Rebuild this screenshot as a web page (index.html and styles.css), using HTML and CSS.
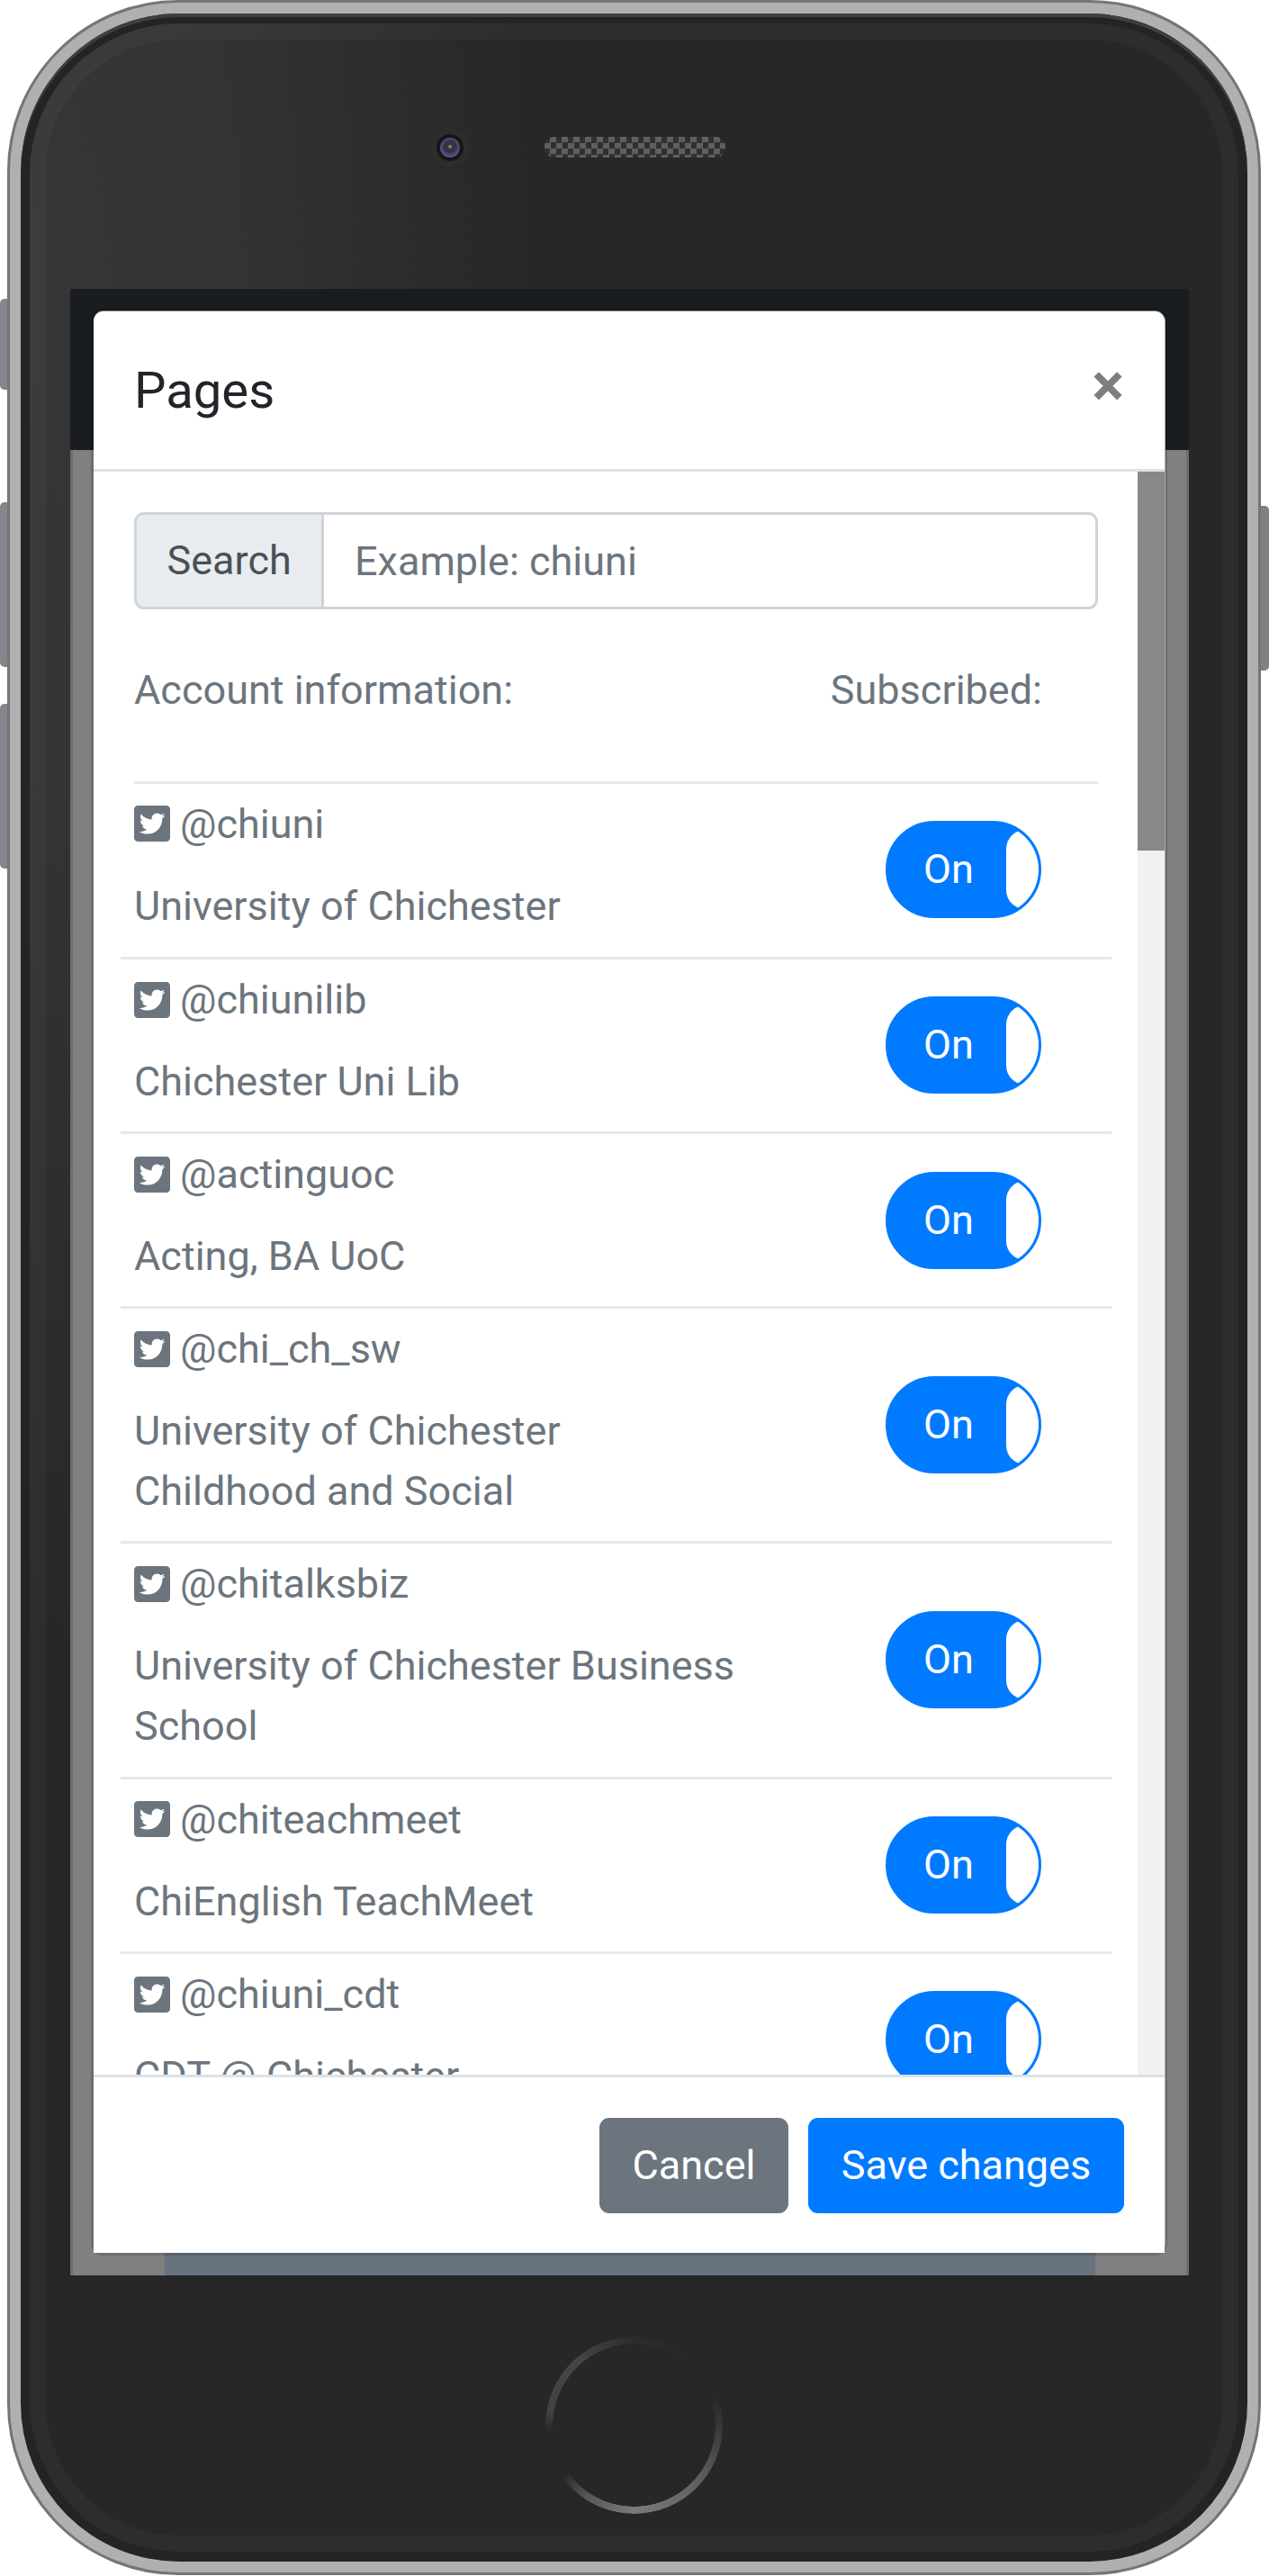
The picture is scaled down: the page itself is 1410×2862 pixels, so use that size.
FILE: index.html
```html
<!DOCTYPE html>
<html lang="en">
<head>
<meta charset="utf-8">
<title>Pages</title>
<link rel="stylesheet" href="styles.css">
</head>
<body>
<div class="phone">
  <span class="side-btn side-left btn-mute"></span>
  <span class="side-btn side-left btn-up"></span>
  <span class="side-btn side-left btn-down"></span>
  <span class="side-btn side-right btn-power"></span>
  <div class="shell">
    <div class="bezel">
      <div class="band">
        <div class="face">
          <div class="sensors">
            <span class="camera"><span class="lens"><span class="pupil"></span></span></span>
            <span class="speaker"></span>
          </div>
          <div class="screen">
            <div class="screen-top"></div>
            <div class="stage"><div class="strip"></div></div>
            <div class="modal">
              <div class="modal-header">
                <h5 class="modal-title">Pages</h5>
                <span class="close">×</span>
              </div>
              <div class="modal-body">
                <div class="content">
                  <div class="search">
                    <span class="search-label">Search</span>
                    <input class="search-input" type="text" placeholder="Example: chiuni">
                  </div>
                  <div class="labels">
                    <span>Account information:</span>
                    <span>Subscribed:</span>
                  </div>
                  <div class="rule"></div>
                  <div class="account first">
                    <div class="info">
                      <div class="handle"><svg class="tw" viewBox="0 32 448 448"><use href="#tw"/></svg>@chiuni</div>
                      <div class="name">University of Chichester</div>
                    </div>
                    <div class="toggle"><span class="on">On</span><span class="knob"></span></div>
                  </div>
                  <div class="account">
                    <div class="info">
                      <div class="handle"><svg class="tw" viewBox="0 32 448 448"><use href="#tw"/></svg>@chiunilib</div>
                      <div class="name">Chichester Uni Lib</div>
                    </div>
                    <div class="toggle"><span class="on">On</span><span class="knob"></span></div>
                  </div>
                  <div class="account">
                    <div class="info">
                      <div class="handle"><svg class="tw" viewBox="0 32 448 448"><use href="#tw"/></svg>@actinguoc</div>
                      <div class="name">Acting, BA UoC</div>
                    </div>
                    <div class="toggle"><span class="on">On</span><span class="knob"></span></div>
                  </div>
                  <div class="account">
                    <div class="info">
                      <div class="handle"><svg class="tw" viewBox="0 32 448 448"><use href="#tw"/></svg>@chi_ch_sw</div>
                      <div class="name">University of Chichester<br>Childhood and Social</div>
                    </div>
                    <div class="toggle"><span class="on">On</span><span class="knob"></span></div>
                  </div>
                  <div class="account">
                    <div class="info">
                      <div class="handle"><svg class="tw" viewBox="0 32 448 448"><use href="#tw"/></svg>@chitalksbiz</div>
                      <div class="name">University of Chichester Business School</div>
                    </div>
                    <div class="toggle"><span class="on">On</span><span class="knob"></span></div>
                  </div>
                  <div class="account">
                    <div class="info">
                      <div class="handle"><svg class="tw" viewBox="0 32 448 448"><use href="#tw"/></svg>@chiteachmeet</div>
                      <div class="name">ChiEnglish TeachMeet</div>
                    </div>
                    <div class="toggle"><span class="on">On</span><span class="knob"></span></div>
                  </div>
                  <div class="account">
                    <div class="info">
                      <div class="handle"><svg class="tw" viewBox="0 32 448 448"><use href="#tw"/></svg>@chiuni_cdt</div>
                      <div class="name">CDT @ Chichester</div>
                    </div>
                    <div class="toggle"><span class="on">On</span><span class="knob"></span></div>
                  </div>
                </div>
                <div class="scrollbar"><div class="thumb"></div></div>
              </div>
              <div class="modal-footer">
                <span class="btn btn-cancel">Cancel</span>
                <span class="btn btn-save">Save changes</span>
              </div>
            </div>
          </div>
          <div class="home-zone"><span class="home"></span></div>
        </div>
      </div>
    </div>
  </div>
</div>
<svg class="defs" width="0" height="0"><defs><path id="tw" fill="currentColor" d="M400 32H48C21.5 32 0 53.5 0 80v352c0 26.5 21.5 48 48 48h352c26.5 0 48-21.5 48-48V80c0-26.5-21.5-48-48-48zm-48.9 158.8c.2 2.8.2 5.7.2 8.5 0 86.7-66 186.6-186.6 186.6-37.2 0-71.7-10.8-100.7-29.4 5.3.6 10.4.8 15.8.8 30.7 0 58.9-10.4 81.4-28-28.8-.6-53-19.5-61.3-45.5 10.1 1.5 19.2 1.5 29.6-1.2-30-6.1-52.5-32.5-52.5-64.4v-.8c8.7 4.9 18.9 7.9 29.6 8.3a65.447 65.447 0 0 1-29.2-54.6c0-12.2 3.2-23.4 8.9-33.1 32.3 39.8 80.8 65.8 135.2 68.6-9.3-44.5 24-80.6 64-80.6 18.9 0 35.9 7.9 47.9 20.7 14.8-2.8 29-8.3 41.6-15.8-4.9 15.2-15.1 28-29.6 36.3 14.1-1.5 27.8-5.4 40.4-10.9-9.5 14-21.5 26.4-35.2 36.4z"/></defs></svg>
</body>
</html>
```

FILE: styles.css
```css
* { box-sizing: border-box; }
html, body { margin: 0; padding: 0; background: #fff; }
body { width: 1410px; height: 2862px; overflow: hidden; font-family: Roboto, "Liberation Sans", sans-serif; font-size: 45px; line-height: 67.5px; color: #6c757d; }
.defs { position: absolute; }

.phone { position: relative; width: 1393px; height: 2861px; margin-left: 8px; border: 3px solid #757575; border-radius: 190px; background: #b0b0b0; }
.side-btn { position: absolute; background: #85858c; }
.side-left { left: -11px; width: 8px; border-radius: 5px 0 0 5px; }
.side-right { right: -12px; width: 9px; border-radius: 0 5px 5px 0; background: #808085; }
.btn-mute { top: 329px; height: 101px; }
.btn-up { top: 555px; height: 183px; }
.btn-down { top: 779px; height: 183px; }
.btn-power { top: 559px; height: 183px; }

.shell { height: 100%; padding: 12px; }
.bezel { height: 100%; padding: 11px 10px; border-radius: 176px; background: #242424; box-shadow: inset 0 4px 0 0 #3f3f3f; }
.band { height: 100%; border: 18px solid rgba(255,255,255,.03); border-radius: 166px; background: radial-gradient(ellipse 560px 1500px at 0 300px, #363636 0, #333 40%, #272727 100%) border-box; }
.face { display: flex; flex-direction: column; height: 100%; padding: 0 37px 0 27px; border-radius: 148px; }

.sensors { display: flex; align-items: center; gap: 83px; height: 277px; padding: 0 0 38px 400px; }
.camera { display: flex; align-items: center; justify-content: center; width: 44px; height: 44px; border-radius: 50%; background: #2d2d2d; }
.lens { display: flex; align-items: center; justify-content: center; width: 30px; height: 30px; border-radius: 50%; background: #161618; }
.pupil { width: 22px; height: 22px; border-radius: 50%; background: radial-gradient(circle at 50% 45%, #a8a8b0 0, #3a3744 16%, #33303f 36%, #5c4b84 62%, #6a5795 100%); }
.speaker { width: 201px; height: 23px; border-radius: 11px; background: conic-gradient(#5f5f5f 25%, #303030 0 50%, #5f5f5f 0 75%, #303030 0) 0 0 / 13px 13px; }

.screen { position: relative; display: flex; flex-direction: column; height: 2207px; background: #808080; }
.screen-top { height: 179px; background: #1a1d20; }
.stage { display: flex; flex: 1; align-items: flex-end; padding: 0 101px 0 102px; border-left: 3px solid #6e6e6e; border-right: 3px solid #6e6e6e; }
.strip { width: 100%; height: 25px; background: #67737f; }

.modal { position: absolute; top: 25px; left: 26px; display: flex; flex-direction: column; width: 1190px; height: 2157px; border-radius: 11px; background: #fff; box-shadow: 0 -1px 0 0 #8a8a8a, 1px 0 0 0 #aaa, 0 0 0 3px rgba(0,0,0,.15); }
.modal-header { display: flex; flex: none; align-items: center; justify-content: space-between; height: 178px; padding: 0 45px; border-bottom: 3px solid #dee2e6; }
.modal-title { margin: 0; font-size: 56.25px; font-weight: 400; line-height: 68px; color: #212529; }
.close { position: relative; top: -6px; font-size: 67.5px; font-weight: 700; line-height: 68px; color: #000; opacity: .5; }

.modal-body { display: flex; flex: 1; min-height: 0; }
.content { flex: 1; min-width: 0; overflow: hidden; padding: 45px 44px 0 45px; }
.scrollbar { flex: none; width: 30px; background: #f1f1f1; }
.thumb { height: 421px; background: #888; }

.search { display: flex; height: 108px; }
.search-label { display: flex; align-items: center; width: 211px; padding-left: 33.5px; border: 3px solid #ced4da; border-radius: 11px 0 0 11px; background: #e9ecef; color: #495057; }
.search-input { flex: 1; min-width: 0; height: 108px; padding: 0 34px; margin-left: -3px; border: 3px solid #ced4da; border-radius: 0 11px 11px 0; background: #fff; font: inherit; color: #495057; outline: none; }
.search-input::placeholder { color: #6c757d; opacity: 1; }

.labels { display: flex; justify-content: space-between; margin-top: 56px; padding-right: 62px; }
.rule { height: 3px; margin-top: 67px; background: #e8e8e8; }

.account { display: flex; align-items: center; justify-content: space-between; margin: 0 -15px; padding: 11px 78px 22.2px 15px; border-top: 3px solid #e8e8e8; }
.account.first { border-top: 0; padding-bottom: 23.4px; }
.info { width: 700px; }
.handle { display: flex; align-items: center; margin-bottom: 23.5px; }
.name { line-height: 67px; }
.tw { width: 40px; height: 40px; margin-right: 11px; color: #6c757d; flex: none; }
.toggle { position: relative; flex: none; width: 173px; height: 108px; margin: -3px 0 -14px; overflow: hidden; border: 3px solid #007bff; border-radius: 54px; background: #007bff; color: #fff; }
.on { position: absolute; left: 39px; top: 17px; line-height: 67.5px; }
.knob { position: absolute; left: 131px; top: 7px; width: 100px; height: 88px; border-radius: 21px; background: #fff; }

.modal-footer { display: flex; flex: none; align-items: center; justify-content: flex-end; gap: 22px; height: 198px; padding: 0 45px; border-top: 3px solid #dee2e6; background: #fff; }
.btn { display: flex; align-items: center; justify-content: center; height: 106px; border-radius: 11px; color: #fff; white-space: nowrap; }
.btn-cancel { width: 210px; background: #6c757d; }
.btn-save { width: 351px; background: #007bff; }

.home-zone { display: flex; justify-content: center; padding-top: 68px; }
.home { width: 197px; height: 197px; margin-left: 10px; border-radius: 50%; background: conic-gradient(#2c2c2c 0deg, #272727 40deg, #272727 70deg, #3c3c3c 95deg, #5e5e5e 130deg, #7a7a7a 180deg, #555 215deg, #272727 235deg, #272727 265deg, #434343 280deg, #454545 320deg, #2c2c2c 360deg); -webkit-mask: radial-gradient(circle closest-side, transparent 90px, #000 90.5px); mask: radial-gradient(circle closest-side, transparent 90px, #000 90.5px); }
```
